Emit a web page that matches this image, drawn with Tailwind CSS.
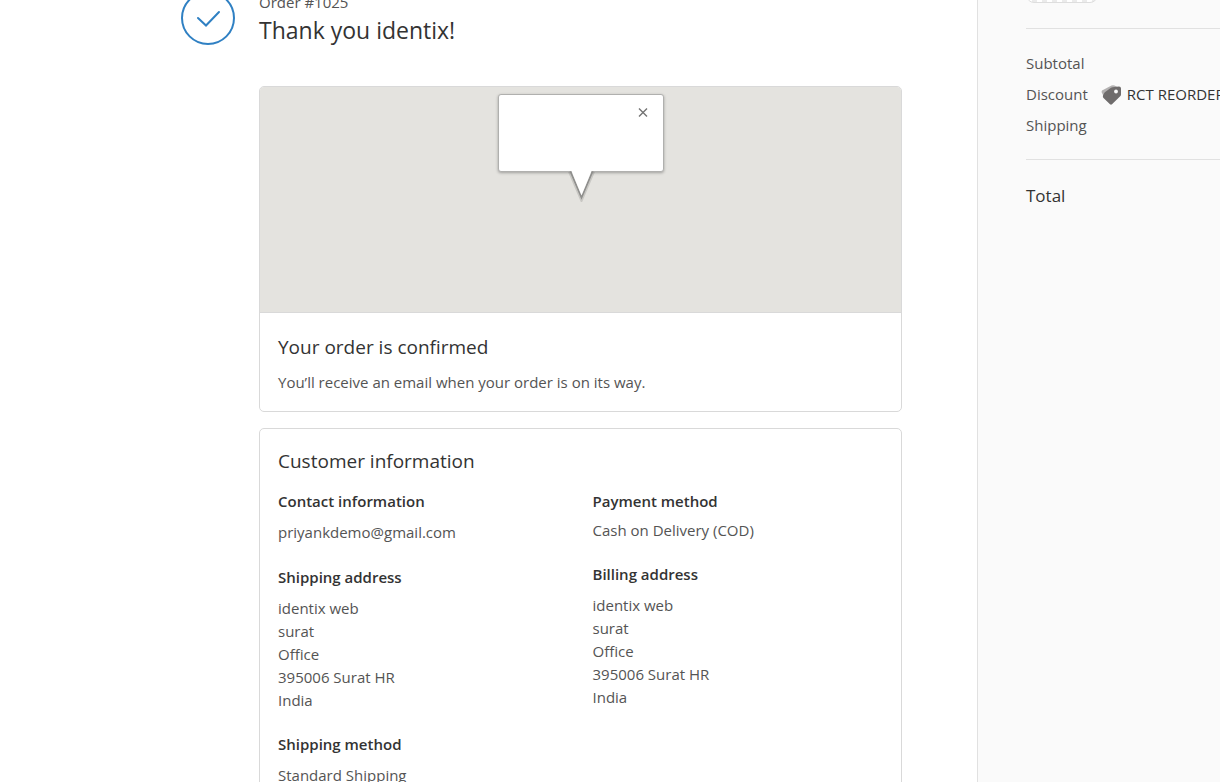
<!DOCTYPE html>
<html lang="en">
<head>
  <meta charset="UTF-8" />
  <meta name="viewport" content="width=device-width, initial-scale=1" />
  <title>Thank you identix!</title>
  <script src="https://cdn.jsdelivr.net/npm/@tailwindcss/browser@4"></script>
</head>
<body class="bg-white font-['Open_Sans','Noto_Sans',sans-serif] text-[15px] leading-[23px] text-[#545454]">

  <div class="flex h-screen overflow-hidden">
    <main class="min-w-0 flex-1 pr-[75px]">
      <div class="ml-auto max-w-[721px]">

        <header class="-mt-[9px] mb-10 flex gap-6">
          <svg class="h-[54px] w-[54px] shrink-0" viewBox="0 0 54 54" fill="none" stroke="#2f80c3" stroke-width="2" aria-hidden="true">
            <circle cx="27" cy="27" r="26" />
            <path d="M17 27l8 7.500L38 21" stroke-linecap="round" />
          </svg>
          <div>
            <p>Order #1025</p>
            <h1 class="text-[23px] leading-8 text-[#333]">Thank you identix!</h1>
          </div>
        </header>

        <div class="ml-[78px] space-y-4">
          <section class="overflow-hidden rounded-[5px] border border-[#d9d9d9]">
            <div class="relative h-[226px] border-b border-[#d9d9d9] bg-[#e4e3df]">
              <!-- map info window -->
              <div class="absolute top-[7px] left-1/2 h-[78px] w-[166px] -translate-x-1/2 rounded-[3px] border border-[#b0b0ae] bg-white shadow-[0_1px_3px_rgba(0,0,0,0.3)]">
                <button type="button" aria-label="Close" class="absolute top-3 right-[14px] p-px">
                  <svg class="h-[10px] w-[10px]" viewBox="0 0 10 10" stroke="#737373" stroke-width="1.400" aria-hidden="true">
                    <path d="M1 .500l8 8M9 .500l-8 8" />
                  </svg>
                </button>
                <svg class="absolute top-[75px] left-1/2 h-[32px] w-[28px] -translate-x-1/2" viewBox="0 0 28 32" aria-hidden="true">
                  <path d="M3 1.500L14.500 28.500 26 1.500" fill="none" stroke="#000" stroke-opacity=".12" stroke-width="4" />
                  <path d="M3.500 1.500L14.500 27.500 25.500 1.500" fill="none" stroke="#8f8f8d" stroke-width="1.800" />
                  <path d="M4 0L14.500 25.500 25 0z" fill="#fff" />
                </svg>
              </div>
            </div>
            <div class="px-[18px] pt-[21px] pb-[17px]">
              <h2 class="mb-[11px] text-[19px] leading-[26px] text-[#333]">Your order is confirmed</h2>
              <p>You’ll receive an email when your order is on its way.</p>
            </div>
          </section>

          <section class="rounded-[5px] border border-[#d9d9d9] px-[18px] pt-[19px] pb-5">
            <h2 class="mb-4 text-[19px] leading-[26px] text-[#333]">Customer information</h2>
            <div class="grid grid-cols-2 gap-6">
              <div>
                <h3 class="mb-2 font-semibold text-[#333]">Contact information</h3>
                <p class="mb-[22px]">priyankdemo@gmail.com</p>
                <h3 class="mb-2 font-semibold text-[#333]">Shipping address</h3>
                <address class="mb-[21px] not-italic">identix web<br>surat<br>Office<br>395006 Surat HR<br>India</address>
                <h3 class="mb-2 font-semibold text-[#333]">Shipping method</h3>
                <p>Standard Shipping</p>
              </div>
              <div>
                <h3 class="mb-[6px] font-semibold text-[#333]">Payment method</h3>
                <p class="mb-[21px]">Cash on Delivery (COD)</p>
                <h3 class="mb-2 font-semibold text-[#333]">Billing address</h3>
                <address class="not-italic">identix web<br>surat<br>Office<br>395006 Surat HR<br>India</address>
              </div>
            </div>
          </section>
        </div>

      </div>
    </main>

    <aside class="w-[243px] shrink-0 overflow-hidden border-l border-[#e1e1e1] bg-[#fafafa] pl-12 whitespace-nowrap">
      <div class="-mt-[61px] mb-[25px] h-16 w-[72px] rounded-lg border border-[#dedede] bg-[repeating-linear-gradient(90deg,#fff_0_5px,#ebebeb_5px_10px)]"></div>
      <dl class="space-y-2 border-y border-[#e1e1e1] pt-[23px] pb-[22px]">
        <div><dt>Subtotal</dt></div>
        <div class="flex items-center">
          <dt>Discount</dt>
          <dd class="ml-[13px] flex items-center gap-[6px] text-[#333]">
            <svg class="h-5 w-5 shrink-0" viewBox="0 0 20 20" aria-hidden="true">
              <path d="M1 5.500L10.500.500q1.500-.700 3 0l3 1.500L3 12 .500 7z" fill="#b3b1b1" />
              <path d="M11.500 2.200L18 1.500q2 0 2 2v6q0 1-.800 1.800L11 19.300q-1 .900-2 0L2.500 13q-.900-1-.500-2.500L3 8.500q.500-1 1.500-1.800l5.500-4q.700-.400 1.500-.500z" fill="#6f6c6c" />
              <circle cx="15" cy="6.500" r="1.900" fill="#fafafa" />
            </svg>
            RCT REORDER
          </dd>
        </div>
        <div><dt>Shipping</dt></div>
      </dl>
      <p class="mt-6 text-[17px] text-[#333]">Total</p>
    </aside>
  </div>

</body>
</html>
